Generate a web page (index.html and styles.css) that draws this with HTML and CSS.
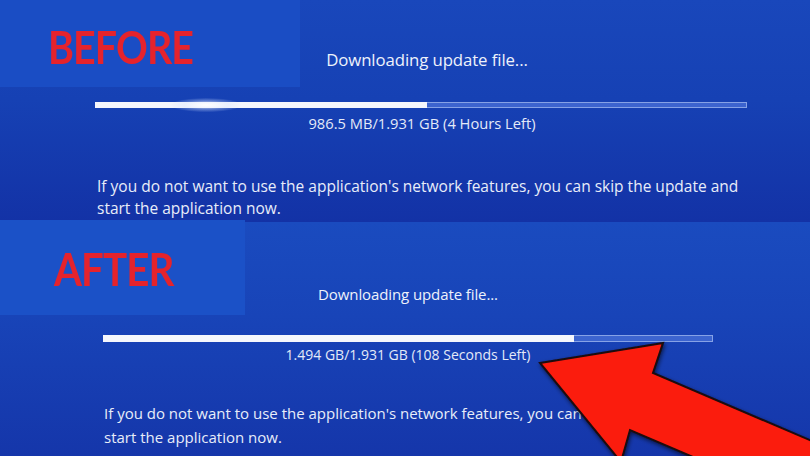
FILE: index.html
```html
<!DOCTYPE html>
<html lang="en">
<head>
  <meta charset="UTF-8" />
  <meta name="viewport" content="width=device-width, initial-scale=1.0" />
  <title>update before / after</title>
  <link rel="stylesheet" href="styles.css">
</head>
<body>
  <div class="frame">

    <!-- before -->
    <section class="panel panel-before">
      <div class="tag tag-before"><span>BEFORE</span></div>
      <div class="download">
        <div class="status">Downloading update file...</div>
        <div class="track">
          <div class="fill" style="width: 51%"></div>
          <div class="flare"></div>
        </div>
        <div class="amount">986.5 MB/1.931 GB (4 Hours Left)</div>
      </div>
      <p class="note">If you do not want to use the application's network features, you can skip the update and<br>start the application now.</p>
    </section>

    <!-- after -->
    <section class="panel panel-after">
      <div class="tag tag-after"><span>AFTER</span></div>
      <div class="download">
        <div class="status">Downloading update file...</div>
        <div class="track">
          <div class="fill" style="width: 77.4%"></div>
        </div>
        <div class="amount">1.494 GB/1.931 GB (108 Seconds Left)</div>
      </div>
      <p class="note">If you do not want to use the application's network features, you can skip the update and<br>start the application now.</p>
    </section>

    <svg class="arrow" viewBox="0 0 810 456" width="810" height="456">
      <defs>
        <filter id="shade" x="-10%" y="-10%" width="130%" height="130%">
          <feDropShadow dx="1" dy="2" stdDeviation="2" flood-color="#000" flood-opacity="0.6"/>
        </filter>
      </defs>
      <polygon points="540,363 663,343 653,373 840,453 840,520 630,430 621,462"
               fill="#fb1a08" stroke="#1a0a10" stroke-width="2" stroke-linejoin="miter" filter="url(#shade)"/>
    </svg>
  </div>
</body>
</html>
```

FILE: styles.css
```css
body {
  margin: 0;
  padding: 0;
  background: #1438aa;
  font-family: 'Open Sans', 'Noto Sans', sans-serif;
  color: #eef2fb;
  overflow: hidden;
}

.frame {
  position: relative;
  width: 810px;
  height: 456px;
  overflow: hidden;
}

.panel {
  position: relative;
  box-sizing: border-box;
}

.panel-before {
  height: 222px;
  padding-top: 48px;
  background: linear-gradient(180deg, #1947bb 0%, #1641b4 45%, #1332a6 100%);
}

.panel-after {
  height: 234px;
  padding-top: 61px;
  background: linear-gradient(180deg, #1a4bbf 0%, #1844b8 40%, #1536aa 100%);
}

/* red stickers pasted over the screen */
.tag {
  position: absolute;
  left: 0;
  box-sizing: border-box;
  font-family: Lato, 'Liberation Sans', sans-serif;
  font-weight: 700;
  color: #e5232c;
  background: #1a4dc4;
}

.tag span {
  display: inline-block;
  letter-spacing: -1px;
  transform: scaleX(0.875);
  transform-origin: left center;
}

.tag-before {
  top: 0;
  width: 300px;
  height: 87px;
  padding: 20px 0 0 48px;
  font-size: 45px;
}

.tag-after {
  top: -2px;
  width: 245px;
  height: 95px;
  padding: 21px 0 0 54px;
  font-size: 46px;
  background: #1b51c7;
}

.download {
  display: flex;
  flex-direction: column;
  align-items: center;
}

.panel-before .download {
  margin-left: 95px;
  width: 652px;
}

.panel-after .download {
  margin-left: 103px;
  width: 610px;
}

.status {
  font-size: 15px;
  line-height: 22px;
  letter-spacing: -0.1px;
}

.panel-before .status {
  margin-left: 12px;
  font-size: 16.8px;
  line-height: 24px;
}

.track {
  position: relative;
  align-self: stretch;
  height: 6px;
  box-sizing: border-box;
  border: 1px solid #86a2e6;
  background: #3c64cf;
}

.panel-before .track {
  margin-top: 30px;
}

.panel-after .track {
  margin-top: 30px;
  height: 7px;
}

.fill {
  position: absolute;
  top: -1px;
  bottom: -1px;
  left: -1px;
  background: #f5f7fc;
}

.flare {
  position: absolute;
  top: -5px;
  left: 75px;
  width: 70px;
  height: 14px;
  border-radius: 50%;
  background: radial-gradient(ellipse at center, rgba(255, 255, 255, 0.9) 0%, rgba(210, 225, 255, 0.35) 45%, rgba(180, 200, 255, 0) 75%);
}

.amount {
  font-size: 14px;
  line-height: 20px;
  margin-top: 5px;
  color: #e4eaf8;
}

.panel-before .amount {
  font-size: 14.7px;
  margin-left: 2px;
}

.panel-after .amount {
  margin-top: 3px;
}

.note {
  margin: 0;
  font-size: 15.5px;
  line-height: 22px;
  color: #e8edf9;
}

.panel-before .note {
  margin: 42px 0 0 97px;
}

.panel-after .note {
  margin: 36px 0 0 104px;
  font-size: 15px;
  line-height: 24px;
}

.arrow {
  position: absolute;
  top: 0;
  left: 0;
  pointer-events: none;
}
```
